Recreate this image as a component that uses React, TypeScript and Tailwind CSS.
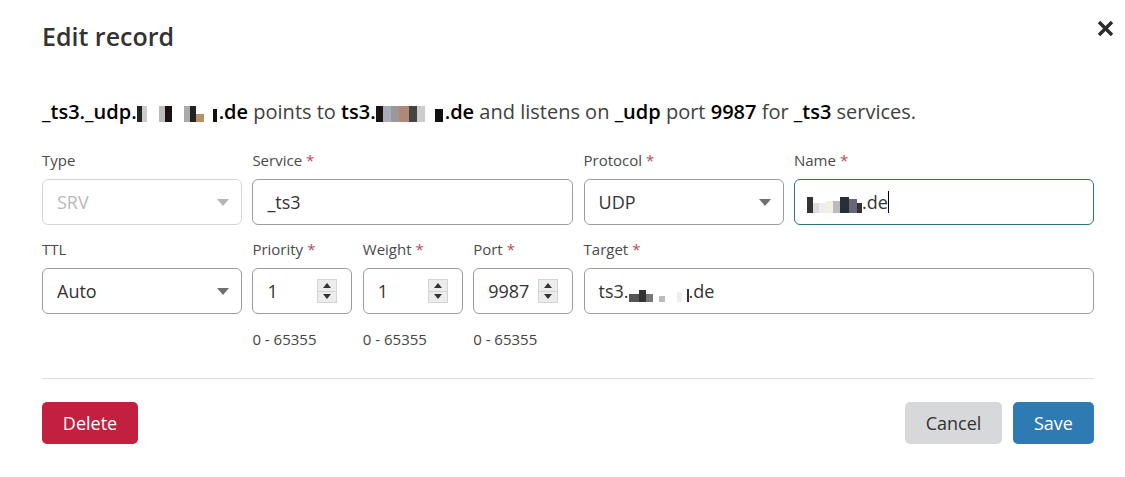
import React from 'react';

const font = { fontFamily: '"Open Sans", "Noto Sans", sans-serif' };

// pixelated (redacted) blocks inside the domain names
const Blur: React.FC<{ blocks: { w: number; c: string; h?: number }[] }> = ({ blocks }) => (
  <span className="inline-flex items-end align-baseline translate-y-[3px]">
    {blocks.map((b, i) => (
      <span key={i} className="inline-block" style={{ width: b.w, height: b.h ?? 16, background: b.c }} />
    ))}
  </span>
);

const Req = () => <span className="text-[#c0485a] ml-1">*</span>;

const Label: React.FC<{ text: string; req?: boolean }> = ({ text, req }) => (
  <div className="h-5 text-[15px] leading-5 text-[#4a4a4a]">
    {text}
    {req && <Req />}
  </div>
);

const Caret: React.FC<{ faded?: boolean }> = ({ faded }) => (
  <svg width="12" height="7" viewBox="0 0 12 7" className="shrink-0">
    <path d="M0 0 L12 0 L6 7 Z" fill={faded ? '#b5b5b5' : '#707070'} />
  </svg>
);

const Spinner = () => (
  <div className="flex flex-col w-[20px] h-[24px] border border-[#d4d4d4] bg-[#ececec] shrink-0">
    <div className="flex-1 flex items-center justify-center border-b border-[#d4d4d4]">
      <svg width="8" height="5" viewBox="0 0 8 5"><path d="M0 5 L8 5 L4 0 Z" fill="#333" /></svg>
    </div>
    <div className="flex-1 flex items-center justify-center">
      <svg width="8" height="5" viewBox="0 0 8 5"><path d="M0 0 L8 0 L4 5 Z" fill="#333" /></svg>
    </div>
  </div>
);

const NumberBox: React.FC<{ value: string }> = ({ value }) => (
  <div className="h-[46px] rounded-[6px] border border-[#9c9c9c] flex items-center pl-[14px] pr-[14px] justify-between text-[18px] text-[#333]">
    <span>{value}</span>
    <Spinner />
  </div>
);

const App: React.FC = () => {
  return (
    <div className="w-[1125px] h-[477px] bg-white relative" style={font}>
      <div className="pl-[42px] pr-[31px] pt-[20px]">
        <h2 className="text-[25px] leading-8 font-semibold text-[#333]">Edit record</h2>

        <p className="mt-[46px] text-[20px] leading-7 text-[#404040] whitespace-nowrap">
          <b className="font-semibold text-black">
            _ts3._udp.
            <Blur
              blocks={[
                { w: 5, c: '#222' }, { w: 5, c: '#ccc' }, { w: 12, c: '#fff' }, { w: 6, c: '#bbb' },
                { w: 7, c: '#1a1111' }, { w: 12, c: '#fff' }, { w: 6, c: '#aaa' }, { w: 6, c: '#222' },
                { w: 8, c: '#b8906a', h: 8 }, { w: 9, c: '#fff' }, { w: 4, c: '#111', h: 13 }, { w: 2, c: '#fff' },
              ]}
            />
            .de
          </b>{' '}
          points to{' '}
          <b className="font-semibold text-black">
            ts3.
            <Blur
              blocks={[
                { w: 7, c: '#1c1410' }, { w: 8, c: '#aab' }, { w: 8, c: '#999' }, { w: 10, c: '#b08878' },
                { w: 8, c: '#444' }, { w: 8, c: '#ccc' }, { w: 10, c: '#fff' }, { w: 8, c: '#111', h: 13 },
                { w: 2, c: '#fff' },
              ]}
            />
            .de
          </b>{' '}
          and listens on <b className="font-semibold text-black">_udp</b> port{' '}
          <b className="font-semibold text-black">9987</b> for <b className="font-semibold text-black">_ts3</b> services.
        </p>

        <div className="mt-[24px] grid grid-cols-[200px_100px_100px_100px_200px_300px] gap-x-[10.4px] gap-y-[14px]">
          {/* row 1 */}
          <div className="flex flex-col gap-[9px]">
            <Label text="Type" />
            <div className="h-[46px] rounded-[6px] border border-[#d6d6d6] flex items-center justify-between pl-[14px] pr-[12px] text-[18px] text-[#b8b8b8]">
              <span>SRV</span>
              <Caret faded />
            </div>
          </div>
          <div className="col-span-3 flex flex-col gap-[9px]">
            <Label text="Service" req />
            <div className="h-[46px] rounded-[6px] border border-[#9c9c9c] flex items-center px-[14px] text-[18px] text-[#333]">
              _ts3
            </div>
          </div>
          <div className="flex flex-col gap-[9px]">
            <Label text="Protocol" req />
            <div className="h-[46px] rounded-[6px] border border-[#9c9c9c] flex items-center justify-between pl-[14px] pr-[12px] text-[18px] text-[#333]">
              <span>UDP</span>
              <Caret />
            </div>
          </div>
          <div className="flex flex-col gap-[9px]">
            <Label text="Name" req />
            <div className="h-[46px] rounded-[6px] border border-[#2f6f7f] flex items-center px-[12px] text-[18px] text-[#333]">
              <Blur
                blocks={[
                  { w: 6, c: '#333' }, { w: 6, c: '#ddd', h: 10 }, { w: 7, c: '#eee', h: 10 }, { w: 7, c: '#f3efe2', h: 12 },
                  { w: 7, c: '#bbb', h: 12 }, { w: 9, c: '#2a2e3a' }, { w: 8, c: '#667', h: 14 }, { w: 5, c: '#333', h: 10 },
                ]}
              />
              <span>.de</span>
              <span className="inline-block w-px h-[22px] bg-black" />
            </div>
          </div>

          {/* row 2 */}
          <div className="flex flex-col gap-[9px]">
            <Label text="TTL" />
            <div className="h-[46px] rounded-[6px] border border-[#9c9c9c] flex items-center justify-between pl-[14px] pr-[12px] text-[18px] text-[#333]">
              <span>Auto</span>
              <Caret />
            </div>
          </div>
          <div className="flex flex-col gap-[9px]">
            <Label text="Priority" req />
            <NumberBox value="1" />
          </div>
          <div className="flex flex-col gap-[9px]">
            <Label text="Weight" req />
            <NumberBox value="1" />
          </div>
          <div className="flex flex-col gap-[9px]">
            <Label text="Port" req />
            <NumberBox value="9987" />
          </div>
          <div className="col-span-2 flex flex-col gap-[9px]">
            <Label text="Target" req />
            <div className="h-[46px] rounded-[6px] border border-[#9c9c9c] flex items-center px-[14px] text-[18px] text-[#333]">
              <span>ts3.</span>
              <Blur
                blocks={[
                  { w: 10, c: '#555', h: 8 }, { w: 7, c: '#333', h: 12 }, { w: 7, c: '#777', h: 8 }, { w: 6, c: '#fff' },
                  { w: 6, c: '#bbb', h: 6 }, { w: 12, c: '#fff' }, { w: 5, c: '#eee', h: 10 }, { w: 5, c: '#fff' },
                  { w: 2, c: '#333', h: 13 },
                ]}
              />
              <span>.de</span>
            </div>
          </div>
        </div>

        <div className="mt-[15px] grid grid-cols-[200px_100px_100px_100px_200px_300px] gap-x-[10.4px] text-[15px] leading-5 text-[#444]">
          <div />
          <div>0 - 65355</div>
          <div>0 - 65355</div>
          <div>0 - 65355</div>
        </div>

        <div className="mt-[29px] h-px bg-[#dcdcdc]" />

        <div className="mt-[23px] flex items-center">
          <button className="h-[42px] w-[96px] rounded-[5px] bg-[#c2203e] text-white text-[18px]">Delete</button>
          <div className="ml-auto flex gap-[11px]">
            <button className="h-[42px] w-[97px] rounded-[5px] bg-[#d7d8da] text-[#333] text-[18px]">Cancel</button>
            <button className="h-[42px] w-[81px] rounded-[5px] bg-[#2e7bb4] text-white text-[18px]">Save</button>
          </div>
        </div>
      </div>

      <button className="absolute left-[1097px] top-[20px] w-[17px] h-[17px]" aria-label="Close">
        <svg width="17" height="17" viewBox="0 0 17 17">
          <path d="M2 2 L15 15 M15 2 L2 15" stroke="#2b2b2b" strokeWidth="3.4" strokeLinecap="butt" />
        </svg>
      </button>
    </div>
  );
};

export default App;
